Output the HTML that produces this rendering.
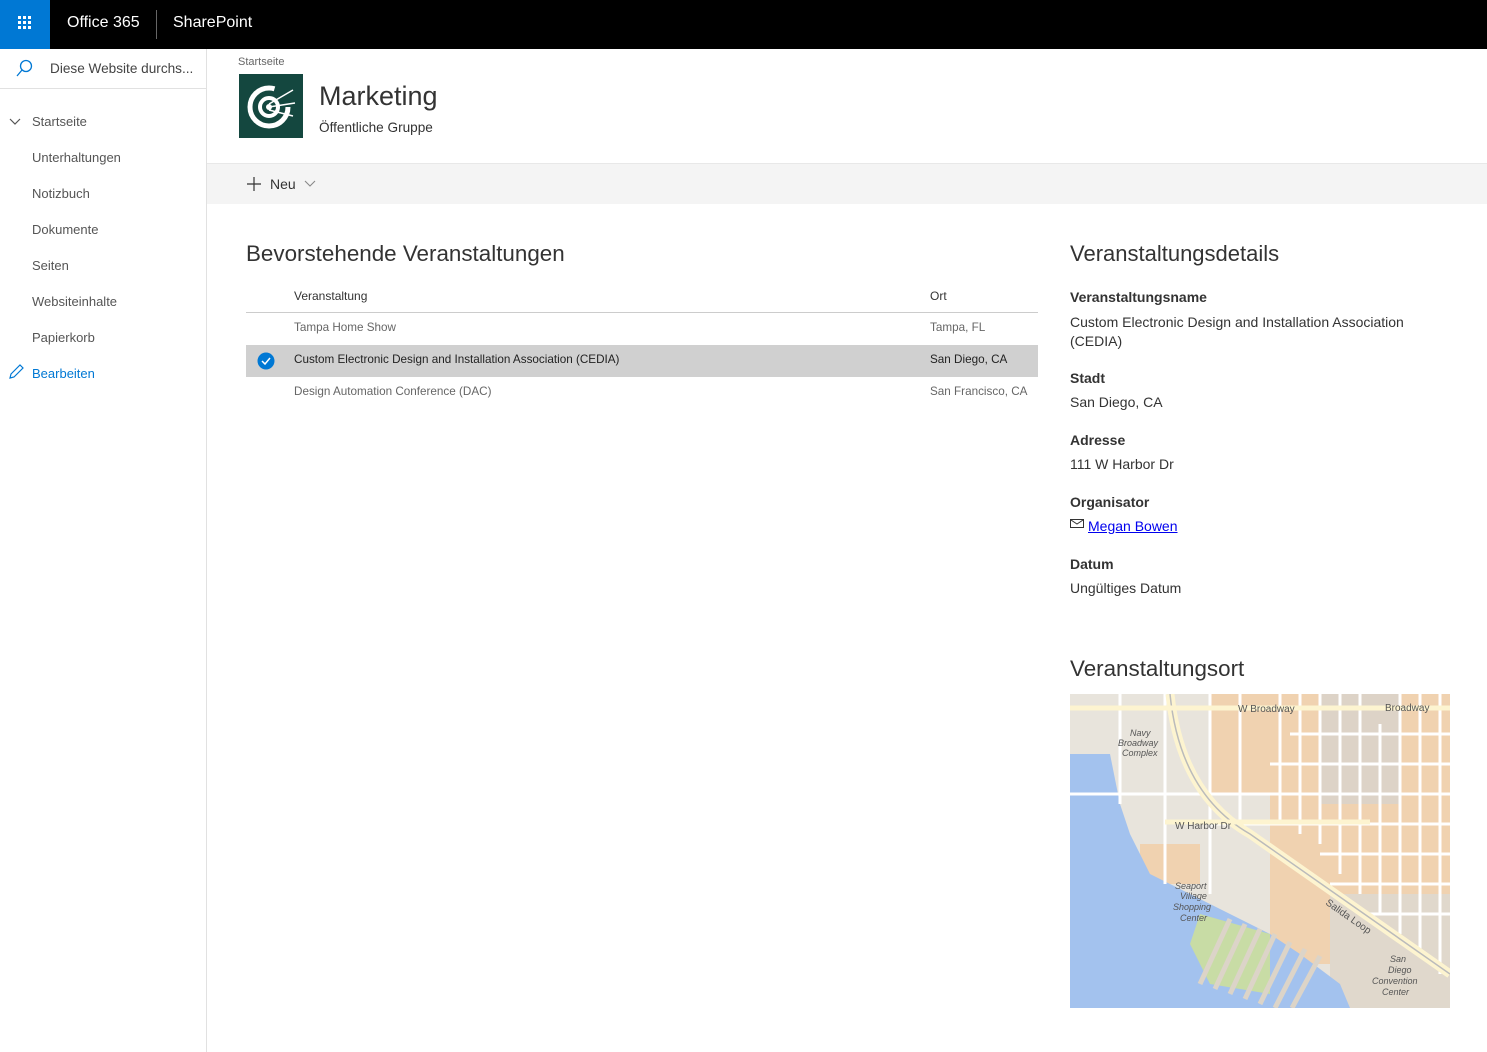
<!DOCTYPE html>
<html><head><meta charset="utf-8"><style>
*{margin:0;padding:0;box-sizing:border-box}
body{width:1487px;height:1052px;overflow:hidden;background:#fff;font-family:"Liberation Sans",sans-serif;color:#333;position:relative}
.top{position:absolute;left:0;top:0;width:1487px;height:49px;background:#000}
.waffle{position:absolute;left:0;top:0;width:50px;height:49px;background:#0078d4}
.abs{position:absolute;white-space:nowrap}
.nav{position:absolute;left:0;top:49px;width:207px;height:1003px;border-right:1px solid #e1e1e1}
.navi{position:absolute;left:32px;font-size:13px;color:#555}
.th{font-size:12px;color:#333}
.td{font-size:11.7px;color:#666}
.lbl{font-size:14px;font-weight:bold;color:#333}
.val{font-size:14px;color:#333}
.h{font-size:22.4px;color:#333}
</style></head><body>
<div class="top"></div>
<div class="waffle"><svg width="50" height="49"><g fill="#fff">
<rect x="18" y="16" width="3" height="3"/><rect x="23" y="16" width="3" height="3"/><rect x="28" y="16" width="3" height="3"/>
<rect x="18" y="21" width="3" height="3"/><rect x="23" y="21" width="3" height="3"/><rect x="28" y="21" width="3" height="3"/>
<rect x="18" y="26" width="3" height="3"/><rect x="23" y="26" width="3" height="3"/><rect x="28" y="26" width="3" height="3"/></g></svg></div>
<div class="abs" style="left:67px;top:14px;font-size:16px;color:#fff">Office 365</div>
<div style="position:absolute;left:156px;top:10px;width:1px;height:29px;background:#666"></div>
<div class="abs" style="left:173px;top:14px;font-size:16px;color:#fff">SharePoint</div>

<div class="nav">
<div style="position:absolute;left:0;top:39px;width:206px;height:1px;background:#e1e1e1"></div>
<svg class="abs" style="left:15px;top:10px" width="20" height="20"><circle cx="11" cy="7" r="5.5" fill="none" stroke="#0078d4" stroke-width="1.3"/><line x1="7" y1="11" x2="2" y2="17" stroke="#0078d4" stroke-width="1.3"/></svg>
<div class="abs" style="left:50px;top:12px;font-size:13.6px;color:#444">Diese Website durchs...</div>
<svg class="abs" style="left:9px;top:69px" width="12" height="8"><path d="M1 1l5 5 5-5" fill="none" stroke="#555" stroke-width="1.2"/></svg>
<div class="navi" style="top:65px">Startseite</div>
<div class="navi" style="top:101px">Unterhaltungen</div>
<div class="navi" style="top:137px">Notizbuch</div>
<div class="navi" style="top:173px">Dokumente</div>
<div class="navi" style="top:209px">Seiten</div>
<div class="navi" style="top:245px">Websiteinhalte</div>
<div class="navi" style="top:281px">Papierkorb</div>
<svg class="abs" style="left:8px;top:315px" width="16" height="16"><path d="M2 14l1-4 9-9 3 3-9 9z" fill="none" stroke="#0078d4" stroke-width="1.2"/></svg>
<div class="navi" style="top:317px;color:#0078d4">Bearbeiten</div>
</div>

<div class="abs" style="left:238px;top:56px;font-size:11px;color:#666">Startseite</div>
<div style="position:absolute;left:239px;top:74px;width:64px;height:64px;background:#14473f">
<svg width="64" height="64"><circle cx="30" cy="33" r="19" fill="none" stroke="#fff" stroke-width="5" stroke-dasharray="95 25"/><circle cx="30" cy="33" r="9" fill="none" stroke="#fff" stroke-width="4"/><circle cx="30" cy="33" r="3" fill="#fff"/><g stroke="#fff" stroke-width="1.5"><line x1="30" y1="30" x2="54" y2="16"/><line x1="30" y1="33" x2="56" y2="29"/><line x1="30" y1="36" x2="54" y2="42"/></g></svg></div>
<div class="abs" style="left:319px;top:81px;font-size:27px;color:#333">Marketing</div>
<div class="abs" style="left:319px;top:120px;font-size:13.6px;color:#333">Öffentliche Gruppe</div>

<div style="position:absolute;left:207px;top:163px;width:1280px;height:41px;background:#f4f4f4;border-top:1px solid #e8e8e8"></div>
<svg class="abs" style="left:246px;top:176px" width="16" height="16"><path d="M8 1v14M1 8h14" stroke="#333" stroke-width="1.2"/></svg>
<div class="abs" style="left:270px;top:176px;font-size:14px;color:#333">Neu</div>
<svg class="abs" style="left:304px;top:180px" width="12" height="8"><path d="M1 1l5 5 5-5" fill="none" stroke="#888" stroke-width="1.1"/></svg>

<div class="abs h" style="left:246px;top:241px">Bevorstehende Veranstaltungen</div>
<div class="abs th" style="left:294px;top:289px">Veranstaltung</div>
<div class="abs th" style="left:930px;top:289px">Ort</div>
<div style="position:absolute;left:246px;top:312px;width:792px;height:1px;background:#ccc"></div>
<div class="abs td" style="left:294px;top:321px">Tampa Home Show</div>
<div class="abs td" style="left:930px;top:321px">Tampa, FL</div>
<div style="position:absolute;left:246px;top:345px;width:792px;height:32px;background:#d0d0d0"></div>
<svg class="abs" style="left:257px;top:352px" width="18" height="18"><circle cx="9" cy="9" r="8.5" fill="#0078d4"/><path d="M5 9l3 3 5-6" fill="none" stroke="#fff" stroke-width="1.5"/></svg>
<div class="abs td" style="left:294px;top:353px;color:#222">Custom Electronic Design and Installation Association (CEDIA)</div>
<div class="abs td" style="left:930px;top:353px;color:#222">San Diego, CA</div>
<div class="abs td" style="left:294px;top:385px">Design Automation Conference (DAC)</div>
<div class="abs td" style="left:930px;top:385px">San Francisco, CA</div>

<div class="abs h" style="left:1070px;top:241px;font-size:22px">Veranstaltungsdetails</div>
<div class="abs lbl" style="left:1070px;top:289px">Veranstaltungsname</div>
<div class="abs val" style="left:1070px;top:313px;line-height:19px;white-space:normal;width:360px">Custom Electronic Design and Installation Association (CEDIA)</div>
<div class="abs lbl" style="left:1070px;top:370px">Stadt</div>
<div class="abs val" style="left:1070px;top:394px">San Diego, CA</div>
<div class="abs lbl" style="left:1070px;top:432px">Adresse</div>
<div class="abs val" style="left:1070px;top:456px">111 W Harbor Dr</div>
<div class="abs lbl" style="left:1070px;top:494px">Organisator</div>
<svg class="abs" style="left:1070px;top:519px" width="15" height="10"><rect x="0.5" y="0.5" width="13" height="8" fill="none" stroke="#333"/><path d="M1 1l6 4 6-4" fill="none" stroke="#333"/></svg>
<div class="abs val" style="left:1088px;top:518px;color:#0000ee;text-decoration:underline">Megan Bowen</div>
<div class="abs lbl" style="left:1070px;top:556px">Datum</div>
<div class="abs val" style="left:1070px;top:580px">Ungültiges Datum</div>

<div class="abs h" style="left:1070px;top:656px">Veranstaltungsort</div>
<svg class="abs" style="left:1070px;top:694px" width="380" height="314" viewBox="0 0 380 314">
<rect width="380" height="314" fill="#e8e4dc"/>
<g fill="#f0d2b0">
<rect x="140" y="0" width="240" height="100"/><rect x="200" y="100" width="180" height="170"/><rect x="70" y="150" width="60" height="40"/>
</g>
<rect x="250" y="0" width="80" height="110" fill="#ddd3c7"/>
<rect x="260" y="200" width="120" height="114" fill="#e0d8cc"/>
<path d="M0 60 L40 60 L50 110 L60 140 L80 180 L120 200 L150 215 L200 240 L230 260 L270 290 L280 314 L0 314Z" fill="#a3c2ee"/>
<path d="M130 220 L200 240 L200 300 L140 290 L120 250Z" fill="#c8dca5"/>
<g stroke="#dcd4c8" stroke-width="5">
<line x1="160" y1="225" x2="130" y2="290"/><line x1="175" y1="230" x2="145" y2="295"/><line x1="190" y1="235" x2="160" y2="300"/><line x1="205" y1="240" x2="175" y2="305"/><line x1="220" y1="248" x2="190" y2="310"/><line x1="235" y1="255" x2="205" y2="314"/><line x1="250" y1="262" x2="222" y2="314"/></g>
<g stroke="#fff" stroke-width="3" fill="none">
<line x1="0" y1="14" x2="380" y2="14"/><line x1="0" y1="100" x2="380" y2="100"/><line x1="140" y1="130" x2="380" y2="130"/>
<line x1="200" y1="70" x2="380" y2="70"/><line x1="220" y1="40" x2="380" y2="40"/><line x1="250" y1="160" x2="380" y2="160"/><line x1="260" y1="190" x2="380" y2="190"/><line x1="290" y1="220" x2="380" y2="220"/>
<line x1="210" y1="0" x2="210" y2="130"/><line x1="230" y1="0" x2="230" y2="140"/><line x1="250" y1="0" x2="250" y2="150"/><line x1="270" y1="0" x2="270" y2="180"/><line x1="290" y1="0" x2="290" y2="200"/><line x1="310" y1="30" x2="310" y2="220"/><line x1="330" y1="0" x2="330" y2="240"/><line x1="350" y1="0" x2="350" y2="260"/><line x1="370" y1="0" x2="370" y2="280"/>
<line x1="50" y1="0" x2="50" y2="110"/><line x1="95" y1="0" x2="95" y2="190"/><line x1="140" y1="0" x2="140" y2="200"/><line x1="170" y1="0" x2="170" y2="130"/>
</g>
<path d="M100 0 Q110 100 180 140 L380 280" stroke="#fdf4d0" stroke-width="9" fill="none"/>
<path d="M100 0 Q110 100 180 140 L380 280" stroke="#bbb" stroke-width="1.5" fill="none"/>
<line x1="0" y1="14" x2="380" y2="14" stroke="#fdf4d0" stroke-width="5"/>
<line x1="95" y1="128" x2="300" y2="128" stroke="#fdf4d0" stroke-width="5"/>
<g font-family="Liberation Sans" font-size="10" fill="#555"><text x="168" y="18">W Broadway</text><text x="315" y="17">Broadway</text><text x="105" y="135">W Harbor Dr</text><text x="255" y="210" transform="rotate(35 255 210)">Salida Loop</text><text x="60" y="42" font-style="italic" font-size="9">Navy</text><text x="48" y="52" font-style="italic" font-size="9">Broadway</text><text x="52" y="62" font-style="italic" font-size="9">Complex</text><text x="105" y="195" font-style="italic" font-size="9">Seaport</text><text x="110" y="205" font-style="italic" font-size="9">Village</text><text x="103" y="216" font-style="italic" font-size="9">Shopping</text><text x="110" y="227" font-style="italic" font-size="9">Center</text><text x="320" y="268" font-style="italic" font-size="9">San</text><text x="318" y="279" font-style="italic" font-size="9">Diego</text><text x="302" y="290" font-style="italic" font-size="9">Convention</text><text x="312" y="301" font-style="italic" font-size="9">Center</text></g>
</svg>
</body></html>
